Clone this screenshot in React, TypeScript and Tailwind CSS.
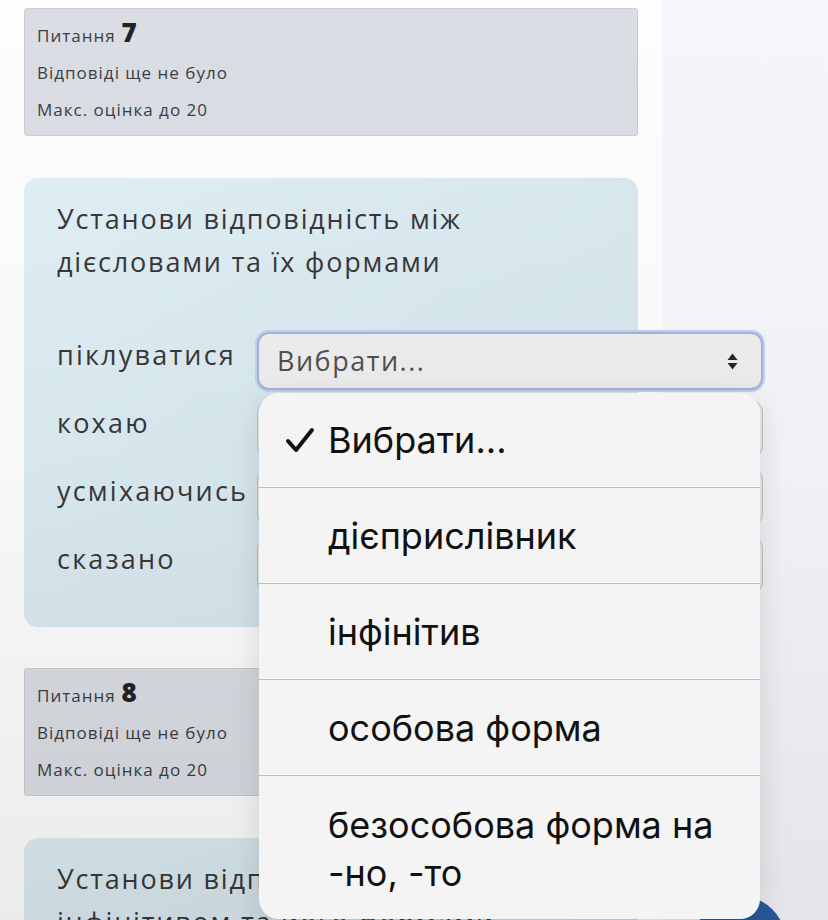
import React from "react";

const page = { fontFamily: '"Open Sans", "Noto Sans", sans-serif' };
const ios = { fontFamily: 'Inter, "Liberation Sans", sans-serif' };

const InfoBox = ({ num }: { num: number }) => (
	<div className="box-border h-[128px] w-[614px] rounded-[3px] border border-[#c9ccd2] bg-[#dadde3] px-[12px] pt-[8px] text-[#3a3d42] leading-[37px] tracking-[1px]">
		<div className="flex items-baseline gap-[6px] text-[17px]">
			Питання <span className="text-[26px] font-extrabold leading-[30px] text-[#222]">{num}</span>
		</div>
		<div className="text-[17px]">Відповіді ще не було</div>
		<div className="text-[17px]">Макс. оцінка до 20</div>
	</div>
);

const SortArrows = () => (
	<svg width="11" height="17" viewBox="0 0 11 17" fill="#262626">
		<path d="M5.5 0.5 L10.5 7 H0.5 Z" />
		<path d="M5.5 16.5 L10.5 10 H0.5 Z" />
	</svg>
);

const Check = () => (
	<svg width="30" height="26" viewBox="0 0 30 26" fill="none" stroke="#111" strokeWidth="4" strokeLinecap="round" strokeLinejoin="round">
		<path d="M3 14 L11 23 L27 3" />
	</svg>
);

const rows = ["піклуватися", "кохаю", "усміхаючись", "сказано"];

const options = ["дієприслівник", "інфінітив", "особова форма"];

export default function App() {
	return (
		<div className="relative h-[920px] w-[828px] overflow-hidden bg-[#fdfdfe]" style={page}>
			<div className="flex">
				{/* Main column */}
				<div className="relative z-10 w-[662px] shrink-0 pl-[24px] pt-[8px]">
					<InfoBox num={7} />

					{/* Question 7 */}
					<div className="mt-[42px] h-[449px] w-[614px] rounded-[14px] bg-linear-to-br from-[#e0eff6] to-[#d3e3ea] pl-[33px] pt-[19px]">
						<p className="text-[27px] leading-[43px] tracking-[1.8px] text-[#383838]">
							Установи відповідність між
							<br />
							дієсловами та їх формами
						</p>

						<div className="mt-[49px] flex flex-col gap-[10px]">
							{rows.map((label, i) => (
								<div key={label} className="flex h-[58px] items-start">
									<div className="w-[200px] shrink-0 pt-[3px] text-[27px] leading-[40px] tracking-[2.2px] text-[#383838]">
										{label}
									</div>
									<div
										className={
											i === 0
												? "flex h-[58px] w-[506px] shrink-0 items-center justify-between rounded-[12px] border-2 border-[#a3b5e0] bg-[#eeeeef] pl-[18px] pr-[23px] ring-2 ring-[#c4d0ee]"
												: "flex h-[58px] w-[506px] shrink-0 items-center justify-between rounded-[12px] border border-[#c4c4c6] bg-[#efeff0] pl-[19px] pr-[23px]"
										}
									>
										<span className="text-[27px] tracking-[1.5px] text-[#505050]">Вибрати...</span>
										<SortArrows />
									</div>
								</div>
							))}
						</div>
					</div>

					<div className="mt-[41px]">
						<InfoBox num={8} />
					</div>

					{/* Question 8 */}
					<div className="mt-[42px] h-[200px] w-[614px] rounded-[14px] bg-linear-to-br from-[#dcebf2] to-[#cfdee5] pl-[33px] pt-[19px]">
						<p className="text-[27px] leading-[43px] tracking-[1.8px] text-[#383838]">
							Установи відповідність між
							<br />
							інфінітивом та його формами
						</p>
					</div>
				</div>

				{/* Side column */}
				<div className="h-[920px] flex-1 bg-[#f5f6fb]" />
			</div>

			{/* Back-to-top button */}
			<div className="absolute left-[694px] top-[896px] z-10 h-[92px] w-[92px] rounded-full bg-[#2b5da3]" />

			{/* Dim */}
			<div className="pointer-events-none absolute inset-0 z-20 bg-linear-to-b from-transparent via-black/[0.02] to-black/[0.07]" />

			{/* Native picker */}
			<div
				className="absolute left-[259px] top-[393px] z-30 h-[526px] w-[501px] overflow-hidden rounded-[20px] bg-[#f4f4f5] shadow-[0_6px_30px_rgba(0,0,0,0.12)]"
				style={ios}
			>
				<div className="flex h-[95px] items-center border-b border-[#bdbdbf] pl-[26px] text-[36px] text-[#111]">
					<span className="flex w-[43px]">
						<Check />
					</span>
					Вибрати...
				</div>
				{options.map((o) => (
					<div
						key={o}
						className="flex h-[96px] items-center border-b border-[#bdbdbf] pl-[69px] text-[36px] text-[#111]"
					>
						{o}
					</div>
				))}
				<div className="pl-[69px] pt-[25px] text-[36px] leading-[48px] text-[#111]">
					безособова форма на
					<br />
					-но, -то
				</div>
			</div>
		</div>
	);
}
